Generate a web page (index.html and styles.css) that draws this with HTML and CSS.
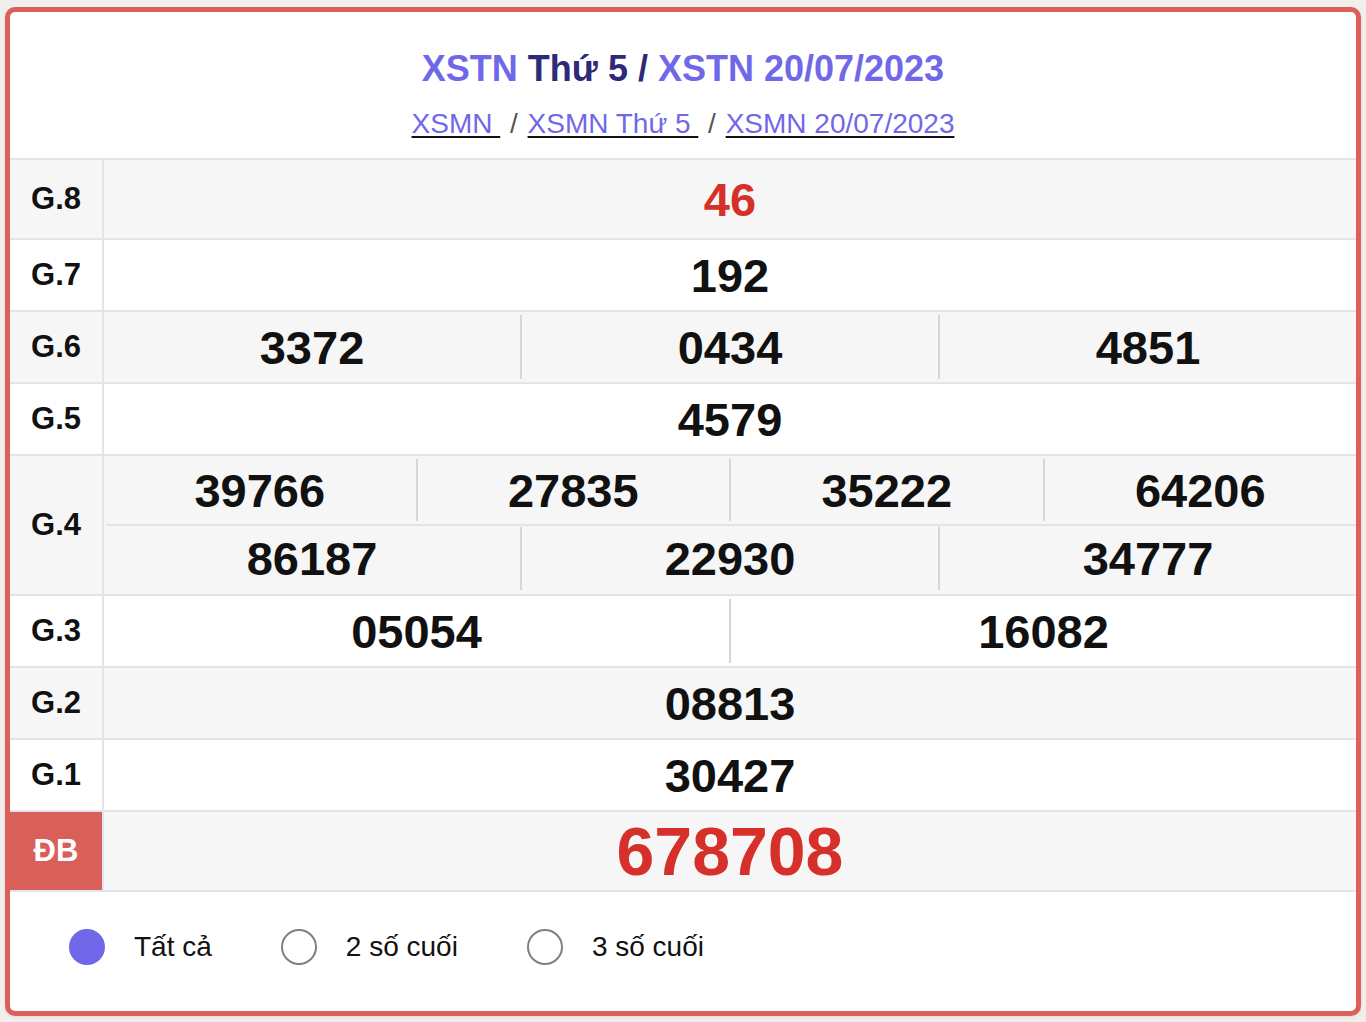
FILE: index.html
```html
<!DOCTYPE html>
<html lang="vi">
<head>
<meta charset="utf-8">
<title>XSTN Thứ 5</title>
<link rel="stylesheet" href="styles.css">
</head>
<body>
<div class="card">
  <div class="header">
    <h1 class="title"><a class="tlink" href="#">XSTN</a> Thứ 5 / <a class="tlink" href="#">XSTN 20/07/2023</a></h1>
    <div class="sub"><a class="slink" href="#">XSMN </a><span class="sep"> / </span><a class="slink" href="#">XSMN Thứ 5 </a><span class="sep"> / </span><a class="slink" href="#">XSMN 20/07/2023</a></div>
  </div>
  <div class="table">
    <div class="row tall alt">
      <div class="label">G.8</div>
      <div class="vals"><div class="num red">46</div></div>
    </div>
    <div class="row">
      <div class="label">G.7</div>
      <div class="vals"><div class="num">192</div></div>
    </div>
    <div class="row alt">
      <div class="label">G.6</div>
      <div class="vals"><div class="num">3372</div><div class="num">0434</div><div class="num">4851</div></div>
    </div>
    <div class="row">
      <div class="label">G.5</div>
      <div class="vals"><div class="num">4579</div></div>
    </div>
    <div class="row alt double">
      <div class="label">G.4</div>
      <div class="stack">
        <div class="vals"><div class="num">39766</div><div class="num">27835</div><div class="num">35222</div><div class="num">64206</div></div>
        <div class="vals lower"><div class="num">86187</div><div class="num">22930</div><div class="num">34777</div></div>
      </div>
    </div>
    <div class="row">
      <div class="label">G.3</div>
      <div class="vals"><div class="num">05054</div><div class="num">16082</div></div>
    </div>
    <div class="row alt">
      <div class="label">G.2</div>
      <div class="vals"><div class="num">08813</div></div>
    </div>
    <div class="row">
      <div class="label">G.1</div>
      <div class="vals"><div class="num">30427</div></div>
    </div>
    <div class="row tall alt">
      <div class="label special">ĐB</div>
      <div class="vals"><div class="num red big">678708</div></div>
    </div>
  </div>
  <div class="footer">
    <label class="opt"><span class="radio checked"></span><span class="otext">Tất cả</span></label>
    <label class="opt"><span class="radio"></span><span class="otext">2 số cuối</span></label>
    <label class="opt"><span class="radio"></span><span class="otext">3 số cuối</span></label>
  </div>
</div>
</body>
</html>
```

FILE: styles.css
```css
* { box-sizing: border-box; }
html, body { margin: 0; padding: 0; }
body {
  background: #f0efeb;
  font-family: "Liberation Sans", Arial, sans-serif;
  color: #111;
}
.card {
  margin: 7px 5px 6px 5px;
  width: 1356px;
  border: 5px solid #dc5f5a;
  border-radius: 10px;
  background: #fff;
  overflow: hidden;
  box-shadow: 0 1px 3px rgba(0,0,0,0.08);
}
.header {
  padding: 35px 0 16px;
  text-align: center;
}
.title {
  margin: 0 0 15px;
  font-size: 36px;
  line-height: 44px;
  font-weight: bold;
  color: #2e2a78;
}
.tlink { color: #7068e8; text-decoration: none; }
.sub {
  font-size: 28px;
  line-height: 36px;
  color: #555;
}
.slink {
  color: #7068e8;
  text-decoration: underline;
  text-decoration-color: #111;
  text-decoration-thickness: 2px;
  text-underline-offset: 3px;
}
.sep { color: #555; white-space: pre; padding: 0 2px; }
.table { border-top: 2px solid #e4e3ea; }
.row {
  display: flex;
  height: 72px;
  border-bottom: 2px solid #e4e3ea;
  background: #fff;
}
.row.alt { background: #f6f6f6; }
.row.tall { height: 80px; }
.row.double { height: 140px; }
.label {
  width: 94px;
  flex: none;
  border-right: 2px solid #e4e3ea;
  display: flex;
  align-items: center;
  justify-content: center;
  font-size: 31px;
  font-weight: bold;
  color: #111;
}
.label.special { background: #d9605a; color: #fff; }
.vals {
  flex: 1;
  display: flex;
  align-items: stretch;
}
.stack {
  flex: 1;
  display: flex;
  flex-direction: column;
}
.stack .vals { height: 68px; flex: none; }
.stack .vals.lower { height: 70px; border-top: 2px solid #e4e3ea; margin-left: 2px; }
.stack .vals.lower .num { margin: 1px 0 4px; }
.stack .vals.lower .num:first-child { margin-left: -2px; }
.num {
  flex: 1;
  display: flex;
  align-items: center;
  justify-content: center;
  font-size: 47px;
  font-weight: bold;
  color: #111;
  margin: 3px 0;
}
.num + .num { border-left: 2px solid #d6d6d6; }
.num.red { color: #d6302a; }
.num.big { font-size: 68px; }
.footer {
  display: flex;
  align-items: center;
  height: 119px;
  padding: 0 0 10px 59px;
  gap: 69px;
}
.opt {
  display: flex;
  align-items: center;
  gap: 29px;
  font-size: 28px;
  color: #111;
}
.radio {
  width: 36px;
  height: 36px;
  border-radius: 50%;
  border: 2px solid #808080;
  background: #fff;
}
.radio.checked { background: #7068e8; border-color: #7068e8; }
```
